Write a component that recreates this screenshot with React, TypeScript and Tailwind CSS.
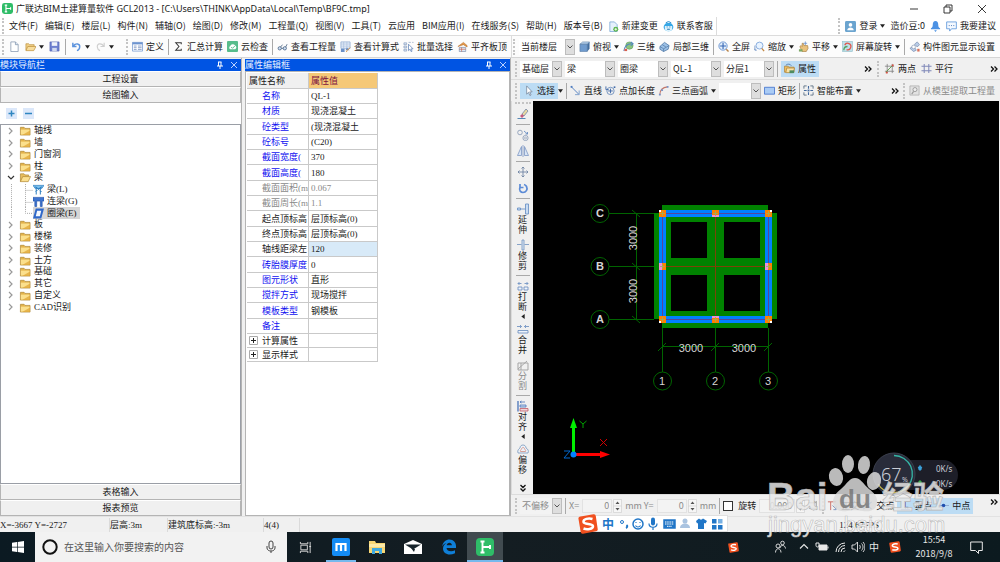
import type { ReactNode } from "react";
import clsx from "clsx";

const UI = "font-['Noto_Sans_CJK_SC','Noto_Sans',sans-serif]";
const SONG = "font-['Liberation_Serif','Noto_Sans_CJK_SC',serif]";

const icons: Record<string, ReactNode> = {
  file: (
    <>
      <path d="M2 1h5l3 3v7.500H2z" fill="#fff" stroke="#7f93ab" strokeWidth=".8" />
      <path d="M7 1v3h3" fill="#dbe6f2" stroke="#7f93ab" strokeWidth=".8" />
    </>
  ),
  open: (
    <>
      <path d="M1 10V3h3l1 1h5v2" fill="#f0cf86" stroke="#b98a33" strokeWidth=".7" />
      <path d="M1 10.500 3 6h9l-2.500 4.500z" fill="#f7dc9c" stroke="#b98a33" strokeWidth=".7" />
    </>
  ),
  save: (
    <>
      <path d="M1 1h10v10H1z" fill="#6d7fd0" stroke="#4b5cab" strokeWidth=".6" />
      <path d="M3 1.300h6v4H3z" fill="#eef2fb" />
      <path d="M3.500 7.500h5V11h-5z" fill="#cfd8ef" />
    </>
  ),
  undo: <path d="M2 2v4h4M2.500 5.500C5 2 10 2.500 9.500 6.500 9.300 8.500 8 10 6.500 10.500" fill="none" stroke="#5c93dd" strokeWidth="1.600" />,
  redo: <path d="M10 2v4H6M9.500 5.500C7 2 2 2.500 2.500 6.500 2.700 8.500 4 10 5.500 10.500" fill="none" stroke="#cfcfcf" strokeWidth="1.300" />,
  define: (
    <>
      <path d="M.5 1.500h11v9.500H.5z" fill="#fff" stroke="#6d94cf" strokeWidth=".8" />
      <path d="M.5 1.500h11v2.200H.5z" fill="#6d94cf" />
      <path d="M2 5.500h3M2 7.300h3M2 9.200h3M6.500 5.500h4M6.500 7.300h4M6.500 9.200h4" stroke="#6b87b8" strokeWidth=".8" />
    </>
  ),
  sigma: <path d="M9 3.500V2H3l3.500 4L3 10h6V8.500" fill="none" stroke="#333" strokeWidth="1.100" />,
  cloud: (
    <>
      <rect width="12" height="12" rx="1" fill="#58bd8c" />
      <path d="M3.500 9a2 2 0 0 1 0-3.500 3 3 0 0 1 5.300-.5A2.200 2.200 0 0 1 9 9z" fill="#fff" />
      <path d="m4.500 6.500 1.500 1.500 2.500-2.500" fill="none" stroke="#4fb983" />
    </>
  ),
  glasses: (
    <>
      <circle cx="3" cy="8" r="1.800" fill="#cfe0f5" stroke="#4a6483" strokeWidth=".9" />
      <circle cx="8.500" cy="8" r="1.800" fill="#cfe0f5" stroke="#4a6483" strokeWidth=".9" />
      <path d="M4.800 8h2M9.500 6.500 11 3.500M4 6.500l2-2.500" stroke="#4a6483" strokeWidth=".9" />
    </>
  ),
  formula: (
    <>
      <path d="M1 1h10v7H1z" fill="#e9f0fa" stroke="#7d9cc9" strokeWidth=".7" />
      <path d="M1 3.300h10M4 1v7M7.500 1v7M1 5.600h10" stroke="#9db5d8" strokeWidth=".6" />
      <path d="M1 8.500h4V12H1zM6 10l1.500-3 3 3z" fill="#6a8fc7" />
      <path d="M7 12c0-3 4-3 4-5" fill="none" stroke="#d49448" />
    </>
  ),
  batch: (
    <>
      <path d="M1 2h3v2H1zM1 5.500h3v2H1zM1 9h3v2H1zM6 1.500h2.500M10 1.500h1.500" fill="#dce7f7" stroke="#8297b8" strokeWidth=".7" />
      <path d="M6 3.500v7l1.700-1.500 1.200 2.600 1-.5-1.200-2.500H11z" fill="#fff" stroke="#5d7fb5" strokeWidth=".8" />
    </>
  ),
  align: (
    <>
      <path d="m1 6 6-4.500L11 5v1.500L7 4z" fill="#e39a4a" stroke="#b66a26" strokeWidth=".6" />
      <path d="M2.500 7h7v4.500h-7z" fill="#dfe9f6" stroke="#7688a6" strokeWidth=".7" />
      <path d="M5 7v4.500M2.500 9h7" stroke="#c85f47" strokeWidth=".7" />
    </>
  ),
  cube: (
    <>
      <path d="m1 3.500 3-2.500h7.500L9 3.500z" fill="#b9d3ee" stroke="#52779f" strokeWidth=".6" />
      <path d="M1 3.500h8v8H1z" fill="#6f9bce" stroke="#52779f" strokeWidth=".6" />
      <path d="M9 3.500 11.500 1v7.500L9 11.500z" fill="#416d9f" />
    </>
  ),
  three: (
    <>
      <circle cx="7" cy="5" r="4" fill="#8bc47e" stroke="#59975a" strokeWidth=".6" />
      <path d="M1 11c0-4 3-8 8-8M8.500 1 11 3 8.500 5" fill="none" stroke="#4f82c4" strokeWidth="1.100" />
      <path d="M1.500 8.500h3V11h-3z" fill="#d65e4e" />
    </>
  ),
  part3d: (
    <>
      <path d="m1 6 5-4.500L11 5l-1 4-5 2.500L1 9z" fill="#9dc1e6" stroke="#46719f" strokeWidth=".8" />
      <path d="m1 6 4 2.500L11 5M5 8.500v3M3.500 4l4 2.500" fill="none" stroke="#46719f" strokeWidth=".7" />
    </>
  ),
  full: (
    <>
      <circle cx="5.500" cy="5.500" r="4.500" fill="#e2eefb" stroke="#6691cf" />
      <path d="M5.500 2.300v6.400M2.300 5.500h6.400" stroke="#3565b4" strokeWidth="1.200" />
      <path d="m9 9 2.500 2.500" stroke="#b7834a" strokeWidth="1.500" />
    </>
  ),
  zoom: (
    <>
      <circle cx="6" cy="5" r="3.800" fill="#e8f3ff" stroke="#82a8dc" />
      <path d="m8.500 8 2.500 3" stroke="#c38a48" strokeWidth="1.500" />
      <path d="M1 5v5h2M.5 8.500l1 1.500" fill="none" stroke="#6b8fc4" strokeWidth=".9" />
    </>
  ),
  pan: (
    <>
      <path d="m2 6 1.500-1 1 1V2.500h1.300L6.500 5h4L11 8l-2 3.500H4.500z" fill="#eac27e" stroke="#a47a3b" strokeWidth=".7" />
      <path d="M8 .5v4M6 2.500h4" stroke="#6b93cf" strokeWidth=".9" />
      <path d="M1 9h4v2.500H1z" fill="#7da765" />
    </>
  ),
  rotate: (
    <>
      <rect x=".5" y=".5" width="11" height="11" fill="#bfe0e9" stroke="#8bb8c6" strokeWidth=".6" />
      <path d="M3 4.500A3.500 3.500 0 1 1 5 9.300" fill="none" stroke="#e0564d" strokeWidth="1.400" />
      <path d="M2 10c0-3 2-4 4-4" fill="none" stroke="#53a365" strokeWidth="1.400" />
    </>
  ),
  show: (
    <>
      <path d="M6 3.500 9 1l2.500 3L9 6.500zM1 8l4-2.500L8 10l-3 1.500z" fill="#b9cde8" stroke="#6d83a8" strokeWidth=".7" />
      <circle cx="5" cy="6.500" r="2" fill="#fff" stroke="#8495b0" strokeWidth=".7" />
      <path d="M9 8.500h2.500v3H9z" fill="#d76d58" />
    </>
  ),
  attr: (
    <>
      <path d="M.5 3.500h4l1 1H11V10H.5z" fill="#eebf63" stroke="#a77a2d" strokeWidth=".7" />
      <path d="M3 5.500h8.500l-1.500 5H2z" fill="#fbe3a6" stroke="#a77a2d" strokeWidth=".7" />
      <path d="M6 8h5v3H6z" fill="#4f8c60" />
      <path d="M2 2.500C4 .5 7 1 8 3" fill="none" stroke="#577fae" />
    </>
  ),
  twoPoint: (
    <>
      <path d="M3.500 1v10M9 1v10M1 3.500h10M1 9h10" stroke="#777" strokeWidth=".8" />
      <path d="m2 10 8-8" stroke="#5a9a4a" />
      <path d="M2 9.500h2v2H2zM8.500 1.500h2v2h-2z" fill="#d84e42" />
    </>
  ),
  parallel: <path d="M3.500 1v10M8.500 1v10M.5 3.500h11M.5 8.500h11" stroke="#7f88b8" strokeWidth="1.100" />,
  cursor: <path d="M4 1v9l2-2 1.500 3.500 1.300-.6-1.500-3.400H10z" fill="#fff" stroke="#6f7f95" strokeWidth=".8" />,
  line: (
    <>
      <path d="m1.500 2 8 8" stroke="#4e7cc0" />
      <path d="M10 6v4.500H5.500" fill="none" stroke="#7b9cca" />
      <path d="M.7 1h2v2h-2z" fill="#4e7cc0" />
    </>
  ),
  pointLen: (
    <>
      <circle cx="6" cy="6.500" r="4" fill="none" stroke="#6d8fbd" />
      <path d="M6 4v5M3.500 6.500h5M1 1.500v3.500h3" fill="none" stroke="#3f69a8" />
      <path d="M9.500 1.500h1.800v1.800H9.500z" fill="#3f69a8" />
    </>
  ),
  arc: (
    <>
      <path d="M2 10.500C2 5 5.500 2.500 10.500 2" fill="none" stroke="#c4786a" strokeWidth="1.200" />
      <path d="M1 9.500h2v2H1zM9.500 1h2v2h-2zM3.500 4.500h2v2h-2z" fill="#7795c9" />
    </>
  ),
  rect: <path d="M.5 2.500h11v7.500H.5z" fill="#a9cbf5" stroke="#4d79cf" />,
  smart: (
    <>
      <path d="M1 4V1h3M8 1h3v3M11 8v3H8M4 11H1V8" fill="none" stroke="#5f7488" />
      <path d="M6 1v3M6 8v3M1 6h3M8 6h3" stroke="#42699f" strokeWidth="1.200" />
      <path d="M5 5h2v2H5z" fill="#42699f" />
    </>
  ),
  extract: (
    <>
      <path d="M1 1h10v10H1z" fill="#e2e2e2" stroke="#aaa" strokeWidth=".8" />
      <circle cx="6.500" cy="5" r="2.200" fill="#eee" stroke="#999" />
      <path d="m5 7-2 3" stroke="#999" strokeWidth="1.200" />
    </>
  ),
  newChange: (
    <>
      <path d="M2 1h5l3 3v7.500H2z" fill="#e5f1fc" stroke="#6fa0d2" strokeWidth=".8" />
      <circle cx="8.500" cy="9" r="2.700" fill="#58b347" />
      <path d="M8.500 7.500v3M7 9h3" stroke="#fff" strokeWidth=".9" />
    </>
  ),
  service: (
    <>
      <ellipse cx="6" cy="6.500" rx="5.300" ry="4.700" fill="#35a7e6" />
      <path d="M2 5.500h8v2.700a4 3 0 0 1-8 0z" fill="#d9f1fd" />
      <path d="M4 6.500h1M7 6.500h1M4.500 9h3" stroke="#176fa8" />
      <path d="m3 2 3-1.500L9 2" fill="none" stroke="#1f86c8" />
    </>
  ),
  user: (
    <>
      <rect width="12" height="12" rx="1.500" fill="#6ba4cf" />
      <circle cx="6" cy="4.300" r="2" fill="#fff" />
      <path d="M2.500 10c0-4 7-4 7 0z" fill="#fff" />
    </>
  ),
  bell: <path d="M6 0c2 0 3 1.500 3 4 0 2 .5 3 2 4v1H1V8c1.500-1 2-2 2-4 0-2.500 1-4 3-4M4.500 10h3L6 12z" fill="#4c92e4" />,
  bubble: (
    <>
      <path d="M.7 1h10.600v7.500H6L4 11V8.500H.7z" fill="#f4f9ff" stroke="#5b95da" strokeWidth=".9" />
      <path d="M3 5h1M5.500 5h1M8 5h1" stroke="#3c70b6" />
    </>
  ),
  erase: (
    <>
      <path d="m5 6 4-5 2 2-4 5z" fill="#e9d9a2" stroke="#667a9e" strokeWidth=".7" />
      <path d="m5 6 2 2-2 2-2-2z" fill="#c65b7d" />
      <path d="M.5 10.500h8" stroke="#5688b5" />
    </>
  ),
  copy: (
    <>
      <circle cx="3" cy="3.500" r="2.300" fill="none" stroke="#8497b4" strokeWidth=".8" />
      <circle cx="8.500" cy="9" r="2.600" fill="none" stroke="#8497b4" strokeWidth=".8" />
      <circle cx="8.500" cy="9" r="1" fill="none" stroke="#8497b4" strokeWidth=".6" />
      <path d="m7 2 3.500 3M10.500 3v2h-2" fill="none" stroke="#5680bd" strokeWidth=".8" />
    </>
  ),
  mirror: <path d="M4.500 1.500v9h-4zM7.500 1.500v9h4zM6 0v12" fill="#d9e5f5" stroke="#7d98c4" strokeWidth=".8" />,
  move: <path d="M6 1v10M1 6h10M4.500 2.500 6 1l1.500 1.500M4.500 9.500 6 11l1.500-1.500M2.500 4.500 1 6l1.500 1.500M9.500 4.500 11 6 9.500 7.500" fill="none" stroke="#6f85a4" strokeWidth=".9" />,
  spin: <path d="M3 2v3.500h3.500M3 5.500C1.500 8.500 4 10.500 6 10.500c3 0 5-3 3.500-6C9 3.500 8 2.800 7 2.500" fill="none" stroke="#5c8bd6" strokeWidth="1.700" />,
  extend: <path d="M8.500 1h3v10h-3zM.5 5h3v2h-3zM3.500 6h5" fill="#c9dcf2" stroke="#6d93c6" strokeWidth=".9" />,
  trim: <path d="M5 1h2v10H5zM0 5.500h4.500M7.500 5.500H12" fill="#dbe7f6" stroke="#7b9ac3" strokeWidth=".9" />,
  split: <path d="M1 7h4v3H1zM7 7h4v3H7zM1 3.500h3.500M7.500 3.500H11M2.500 2 1 3.500 2.500 5M9.500 2 11 3.500 9.500 5" fill="#eef4fb" stroke="#6489bd" strokeWidth=".8" />,
  merge: <path d="M1 7.500h10V10H1zM0 3.500h4.500M7.500 3.500H12M3 2l1.500 1.500L3 5M9 2 7.500 3.500 9 5" fill="#eef4fb" stroke="#6489bd" strokeWidth=".8" />,
  cut: <path d="M1 4h10v7H1zM1 10 10 2M4 4v7" fill="none" stroke="#a5a5a5" strokeWidth="1" />,
  dock: (
    <>
      <path d="M1 1v10.500" stroke="#4974b8" strokeWidth="1.300" />
      <path d="M3 2h5M3 2l1.500-1M3 2l1.500 1M3 5h6v2H3z" fill="#cbdcf2" stroke="#4974b8" strokeWidth=".8" />
      <path d="M3 8.500h8V11H3z" fill="#eed5d9" stroke="#c15c67" strokeWidth=".8" />
    </>
  ),
  offset: (
    <>
      <path d="M1 10C0 7 2 6 3 5c0-4 6-4 6 0 2 1 3 3 2 5z" fill="#edf2f8" stroke="#7998bd" strokeWidth=".8" />
      <path d="M3.500 8.500C3 7 4 7 4.500 6c.5-2 3-2 3 0 1 1 1.500 1.500 1 2.500z" fill="none" stroke="#d08a7e" strokeWidth=".8" />
    </>
  ),
  ortho: (
    <>
      <path d="M1 2h9M4 2v9" stroke="#cc6b63" />
      <path d="m6 6 4 4M10 7v3.500H7" fill="none" stroke="#7a93bd" />
    </>
  ),
  cross: <path d="m1.500 2 9 8M10.500 2l-9 8" stroke="#5c87c4" strokeWidth="1.100" />,
  perp: <path d="M1 10.500h10M6 10.500V2M6 8h2.500v2.500" fill="none" stroke="#5c87c4" strokeWidth="1.100" />,
  mid: (
    <>
      <path d="M0 6h12" stroke="#8fa9d0" />
      <circle cx="6" cy="6" r="2" fill="#1f4fb0" />
    </>
  ),
  angle: <path d="M1 3h7M1 9h7M9 1v10M6 1 9 3M6 11l3-2" fill="none" stroke="#999" />,
  folder: (
    <>
      <path d="M1 2.500h4l1 1.200h5.500V11H1z" fill="#e3b34b" stroke="#a9812c" strokeWidth=".7" />
      <path d="M1.500 5h9.500v5.500H1.500z" fill="#fbe08d" />
      <path d="M11.500 4v7H3l8.500-5z" fill="#dda232" opacity=".7" />
    </>
  ),
  folderOpen: (
    <>
      <path d="M1 10.500V2h4l1 1.200h4V5" fill="#e8bd5d" stroke="#a9812c" strokeWidth=".7" />
      <path d="M1 10.500 3.500 5H12l-2.500 5.500z" fill="#fbdf8e" stroke="#a9812c" strokeWidth=".7" />
    </>
  ),
  beam: (
    <>
      <path d="M0 1.500h12L9.500 5h-7z" fill="#7cc0ee" stroke="#2d7fc1" strokeWidth=".8" />
      <path d="M3.500 5v6.500M8 5v6.500M2.500 3l7 5M9.500 3l-7 5" stroke="#2d7fc1" strokeWidth="1.100" />
    </>
  ),
  linkBeam: <path d="M0 1.500h12v4h-2v6H8v-6H4v6H2v-6H0z" fill="#3e74cf" stroke="#1e4fa6" strokeWidth=".7" />,
  ringBeam: (
    <>
      <path d="M3 .5h9L9 11.500H0z" fill="#2f68c9" />
      <path d="M4.500 3h4.500L7.500 9H3z" fill="#f4f8ff" />
    </>
  ),
};

function Icon({ name, className = "size-[11px]" }: { name: string; className?: string }) {
  return (
    <svg viewBox="0 0 12 12" className={clsx("shrink-0", className)} aria-hidden="true">
      {icons[name]}
    </svg>
  );
}

function Caret() {
  return (
    <svg viewBox="0 0 6 4" className="h-1 w-[5px] shrink-0" aria-hidden="true">
      <path d="M0 0h6L3 4z" fill="#222" />
    </svg>
  );
}

function Tool({
  icon,
  label,
  caret,
  active,
  disabled,
}: {
  icon: string;
  label?: string;
  caret?: boolean;
  active?: boolean;
  disabled?: boolean;
}) {
  return (
    <button
      type="button"
      disabled={disabled}
      aria-label={label ?? icon}
      className={clsx(
        "flex h-4 shrink-0 items-center gap-[3px] whitespace-nowrap",
        active && "bg-[#bcdcf4] px-[3px]",
        disabled && "text-[#8b8b8b]",
      )}
    >
      <Icon name={icon} />
      {label && <span>{label}</span>}
      {caret && <Caret />}
    </button>
  );
}

function Grip() {
  return <span className="h-4 w-0 shrink-0 border-l-2 border-dotted border-[#c4c4c4]" />;
}

function Sep() {
  return <span className="h-4 w-px shrink-0 bg-[#a9a9a9]" />;
}

function More() {
  return (
    <button type="button" aria-label="更多" className="shrink-0">
      <svg viewBox="0 0 8 6" className="h-[6px] w-2" fill="none" stroke="#111" strokeWidth="1.300" aria-hidden="true">
        <path d="m1 .5 2.500 2.500L1 5.500M4.500.5 7 3 4.500 5.500" />
      </svg>
    </button>
  );
}

function Picker({
  label,
  value,
  className,
  disabled,
}: {
  label: string;
  value: string;
  className: string;
  disabled?: boolean;
}) {
  return (
    <label className={clsx("flex h-4 shrink-0", disabled ? "bg-[#f3f3f3] text-[#8b8b8b]" : "bg-white", className)}>
      <select aria-label={label} disabled={disabled} className="h-4 min-w-0 flex-1 appearance-none pl-[2px] outline-none">
        <option>{value}</option>
      </select>
      <span className="flex w-[10px] items-center justify-center border border-[#bdbdbd] bg-[#dedede]">
        <svg viewBox="0 0 6 4" className="h-1 w-[6px]" fill="none" stroke="#555" aria-hidden="true">
          <path d="m.5.5 2.500 2.500L5.500.5" />
        </svg>
      </span>
    </label>
  );
}

function NumberBox({ label, value, className }: { label: string; value: string; className: string }) {
  return (
    <span className="flex h-[14px] shrink-0 items-center gap-px text-[#8b8b8b]">
      <input
        aria-label={label}
        defaultValue={value}
        className={clsx("h-[14px] border border-[#e2e2e2] bg-[#f3f3f3] pr-[2px] text-right outline-none", className)}
      />
      <svg viewBox="0 0 9 14" className="h-[14px] w-[9px]" aria-hidden="true">
        <path d="M.5.5h8v13h-8zM.5 7h8" fill="#f6f6f6" stroke="#d0d0d0" strokeWidth=".7" />
        <path d="m2.500 5 2-2.500 2 2.500zM2.500 9l2 2.500 2-2.500z" fill="#555" />
      </svg>
    </span>
  );
}

function AppLogo({ className }: { className: string }) {
  return (
    <svg viewBox="0 0 18 18" className={clsx("shrink-0", className)} aria-hidden="true">
      <rect width="18" height="18" rx="4" fill="#2fbd68" />
      <path d="M6.500 3.500v11M4.500 3.500h4M4.500 14.500h4M6.500 9H14M14 7v4" fill="none" stroke="#fff" strokeWidth="1.900" />
    </svg>
  );
}

function SogouLogo({ className }: { className: string }) {
  return (
    <svg viewBox="0 0 20 20" className={clsx("shrink-0", className)} aria-hidden="true">
      <path d="M2.500 2.500 15.500.3a2 2 0 0 1 2.300 1.700L19.700 15a2 2 0 0 1-1.700 2.300L5 19.700A2 2 0 0 1 2.700 18L.5 5a2 2 0 0 1 2-2.500" fill="#f0501f" />
      <path d="M14.500 5C10.500 3.800 5.300 5 5.500 7.800c.2 3 9.200 1.200 9.500 4.200.2 3.300-6.300 3.800-9.500 2.500" fill="none" stroke="#fff" strokeWidth="2.500" />
    </svg>
  );
}

const menus = [
  "文件(F)", "编辑(E)", "楼层(L)", "构件(N)", "辅轴(O)", "绘图(D)", "修改(M)", "工程量(Q)",
  "视图(V)", "工具(T)", "云应用", "BIM应用(I)", "在线服务(S)", "帮助(H)", "版本号(B)",
];

function TitleBar() {
  return (
    <header className="flex h-[17px] items-center bg-white pl-[2px]">
      <AppLogo className="size-[11px]" />
      <h1 className="ml-[3px] font-['Noto_Sans','Noto_Sans_CJK_SC',sans-serif] leading-4">
        广联达BIM土建算量软件 GCL2013 - [C:\Users\THINK\AppData\Local\Temp\BF9C.tmp]
      </h1>
      <div className="ml-auto flex gap-6 pr-[13px]">
        {[
          ["最小化", "M1 5h8"],
          ["还原", "M1 3h6v6H1zM3 3V1h6v6H7"],
          ["关闭", "m1 1 8 8M9 1 1 9"],
        ].map(([label, d]) => (
          <button key={label} type="button" aria-label={label}>
            <svg viewBox="0 0 10 10" className="size-[10px]" fill="none" stroke="#222" strokeWidth=".9" aria-hidden="true">
              <path d={d} />
            </svg>
          </button>
        ))}
      </div>
    </header>
  );
}

function MenuBar() {
  return (
    <nav className="flex h-[19px] items-center border-b border-[#dcdcdc] bg-white pl-[2px]">
      <Grip />
      <div className="ml-[5px] flex gap-[7px]">
        {menus.map((m) => (
          <button key={m} type="button" className="shrink-0 whitespace-nowrap">
            {m}
          </button>
        ))}
      </div>
      <div className="ml-[5px] flex h-full items-center gap-[5px] border-r border-[#dcdcdc] pr-[3px]">
        <Tool icon="newChange" label="新建变更" />
        <Tool icon="service" label="联系客服" />
      </div>
      <div className="ml-auto flex items-center gap-[5px] pr-1">
        <Grip />
        <Tool icon="user" label="登录" caret />
        <button type="button">造价豆:0</button>
        <Tool icon="bell" />
        <Tool icon="bubble" label="我要建议" />
      </div>
    </nav>
  );
}

function MainToolbar() {
  return (
    <div className="flex h-[22px] border-b border-[#d5d5d5] bg-[#fcfcfc]">
      <div className="flex w-[512px] shrink-0 items-center gap-[5px] border-r border-[#dcdcdc] pl-[2px]">
        <Grip />
        <Tool icon="file" />
        <Tool icon="open" caret />
        <Tool icon="save" />
        <Sep />
        <Tool icon="undo" caret />
        <Tool icon="redo" caret />
        <div className="ml-[7px] flex items-center gap-1">
          <Grip />
          <Tool icon="define" label="定义" />
          <Sep />
          <Tool icon="sigma" label="汇总计算" />
          <Tool icon="cloud" label="云检查" />
          <Sep />
          <Tool icon="glasses" label="查看工程量" />
          <Tool icon="formula" label="查看计算式" />
          <Tool icon="batch" label="批量选择" />
          <Tool icon="align" label="平齐板顶" />
        </div>
      </div>
      <div className="flex min-w-0 flex-1 items-center gap-1 pl-px">
        <Grip />
        <Picker label="楼层" value="当前楼层" className="w-[56px]" />
        <Tool icon="cube" label="俯视" caret />
        <Tool icon="three" label="三维" />
        <Tool icon="part3d" label="局部三维" />
        <Sep />
        <Tool icon="full" label="全屏" />
        <Tool icon="zoom" label="缩放" caret />
        <Tool icon="pan" label="平移" caret />
        <Tool icon="rotate" label="屏幕旋转" caret />
        <Sep />
        <Tool icon="show" label="构件图元显示设置" />
      </div>
    </div>
  );
}

function PanelHeader({ title }: { title: string }) {
  return (
    <div className="flex h-3 shrink-0 items-center bg-[#0054e3] text-[#e6efff]">
      <h2 className={clsx(SONG, "leading-3")}>{title}</h2>
      <button type="button" aria-label={`固定${title}`} className="ml-auto">
        <svg viewBox="0 0 8 8" className="size-2" fill="none" stroke="#fff" aria-hidden="true">
          <path d="M2.500 1v4M2 1h3.500M5 1v4M1 5h6M4 5v3" />
        </svg>
      </button>
      <button type="button" aria-label={`关闭${title}`} className="mr-[3px] ml-[6px]">
        <svg viewBox="0 0 8 8" className="size-2" stroke="#b9d0ff" aria-hidden="true">
          <path d="m1 1 6 6M7 1 1 7" />
        </svg>
      </button>
    </div>
  );
}

const tree = [
  { label: "轴线" },
  { label: "墙" },
  { label: "门窗洞" },
  { label: "柱" },
  { label: "梁", open: true },
  { label: "梁(L)", icon: "beam" },
  { label: "连梁(G)", icon: "linkBeam" },
  { label: "圈梁(E)", icon: "ringBeam", selected: true },
  { label: "板" },
  { label: "楼梯" },
  { label: "装修" },
  { label: "土方" },
  { label: "基础" },
  { label: "其它" },
  { label: "自定义" },
  { label: "CAD识别" },
];

function BarButton({ children }: { children: ReactNode }) {
  return (
    <button type="button" className="h-4 w-full shrink-0 border border-[#b4b4b4] border-t-white bg-[#f0f0f0] leading-3">
      {children}
    </button>
  );
}

function ModulePanel() {
  return (
    <aside className={clsx(SONG, "flex w-[242px] shrink-0 flex-col border-r border-[#b4b4b4] pt-px")}>
      <PanelHeader title="模块导航栏" />
      <BarButton>工程设置</BarButton>
      <BarButton>绘图输入</BarButton>
      <div className="flex h-[21px] shrink-0 items-center gap-[6px] bg-white pl-[6px]">
        {["M5.500 2.500v6M2.500 5.500h6", "M2 5.500h7"].map((d, i) => (
          <button key={d} type="button" aria-label={i ? "折叠" : "展开"}>
            <svg viewBox="0 0 11 11" className="size-[11px]" aria-hidden="true">
              <path d="M0 0h11v11H0z" fill="#dce8fa" />
              <path d={d} stroke="#2f86c1" strokeWidth="1.500" />
            </svg>
          </button>
        ))}
      </div>
      <div className="flex-1 border border-[#9a9ea6] bg-white">
        <ul className="grid h-[188px] auto-rows-fr text-[9px] leading-[11px]">
          {tree.map((n) => (
            <li key={n.label} className="flex min-h-0 items-center pl-[6px] whitespace-nowrap">
              {n.icon ? (
                <>
                  <svg viewBox="0 0 26 12" preserveAspectRatio="none" className="h-full w-[26px]" fill="none" stroke="#aaa" strokeDasharray="1 1" aria-hidden="true">
                    <path d={n.selected ? "M4.500 0v12M18.500 0v6.500h8" : "M4.500 0v12M18.500 0v12M18.500 6.500h8"} />
                  </svg>
                  <button type="button" className={clsx("flex h-full items-center gap-[3px] pr-[3px]", n.selected && "bg-[#d6d6d6]")}>
                    <Icon name={n.icon} />
                    {n.label}
                  </button>
                </>
              ) : (
                <button type="button" className="flex h-full items-center">
                  <svg viewBox="0 0 8 8" className="size-2" fill="none" stroke={n.open ? "#333" : "#999"} strokeWidth="1.200" aria-hidden="true">
                    <path d={n.open ? "m1 2 3 3 3-3" : "m2 1 3 3-3 3"} />
                  </svg>
                  <Icon name={n.open ? "folderOpen" : "folder"} className="mr-[3px] ml-1 h-[11px] w-3" />
                  {n.label}
                </button>
              )}
            </li>
          ))}
        </ul>
      </div>
      <BarButton>表格输入</BarButton>
      <BarButton>报表预览</BarButton>
    </aside>
  );
}

const blue = "text-[#1010f0]";
const grey = "text-[#8a8a8a]";

const props: { name: string; value: string; tone?: string; active?: boolean }[] = [
  { name: "名称", value: "QL-1", tone: blue },
  { name: "材质", value: "现浇混凝土", tone: blue },
  { name: "砼类型", value: "(现浇混凝土", tone: blue },
  { name: "砼标号", value: "(C20)", tone: blue },
  { name: "截面宽度(", value: "370", tone: blue },
  { name: "截面高度(", value: "180", tone: blue },
  { name: "截面面积(m", value: "0.067", tone: grey },
  { name: "截面周长(m", value: "1.1", tone: grey },
  { name: "起点顶标高", value: "层顶标高(0)" },
  { name: "终点顶标高", value: "层顶标高(0)" },
  { name: "轴线距梁左", value: "120", active: true },
  { name: "砖胎膜厚度", value: "0", tone: blue },
  { name: "图元形状", value: "直形", tone: blue },
  { name: "搅拌方式", value: "现场搅拌", tone: blue },
  { name: "模板类型", value: "钢模板", tone: blue },
  { name: "备注", value: "", tone: blue },
];

function PropertyPanel() {
  const cell = "overflow-hidden border-r border-b border-[#c9c9c9] p-0 text-left font-normal whitespace-nowrap";
  return (
    <section className={clsx(SONG, "ml-[3px] flex w-[266px] shrink-0 flex-col border-r border-[#b4b4b4] pt-px")}>
      <PanelHeader title="属性编辑框" />
      <div className="flex-1 border border-[#b4b4b4] bg-white pt-px pl-px">
        <table className="w-[131px] table-fixed border-separate border-spacing-0 leading-3">
          <thead>
            <tr className="h-4">
              <th className={clsx(cell, "w-[62px] bg-[#f0f0f0] pl-[2px]")}>属性名称</th>
              <th className={clsx(cell, "bg-[#f5c877] pl-[2px] text-[#7a1040]")}>属性值</th>
            </tr>
          </thead>
          <tbody>
            {props.map((p) => (
              <tr key={p.name} className="h-[15px] nth-[3n]:h-4">
                <td className={clsx(cell, "pl-[15px]", p.tone)}>{p.name}</td>
                <td className={clsx(cell, "pl-[2px]", p.tone === grey && grey, p.active && "bg-[#d8eaf8]")}>{p.value}</td>
              </tr>
            ))}
            {["计算属性", "显示样式"].map((name) => (
              <tr key={name} className="h-[14px]">
                <td className={cell}>
                  <button type="button" className="flex items-center gap-1 pl-[2px]">
                    <svg viewBox="0 0 9 9" className="size-[9px]" fill="#fff" aria-hidden="true">
                      <path d="M.5.5h8v8h-8z" stroke="#aaa" />
                      <path d="M4.500 2v5M2 4.500h5" stroke="#222" />
                    </svg>
                    {name}
                  </button>
                </td>
                <td className={cell} />
              </tr>
            ))}
          </tbody>
        </table>
      </div>
    </section>
  );
}

function SideTool({ icon, label, caret, disabled }: { icon: string; label?: string; caret?: boolean; disabled?: boolean }) {
  return (
    <button
      type="button"
      disabled={disabled}
      aria-label={label ?? icon}
      className={clsx("flex shrink-0 flex-col items-center", disabled && "text-[#8b8b8b]")}
    >
      <Icon name={icon} className="size-3" />
      {label && <span className="w-[9px] text-[9px] leading-[10px] break-all">{label}</span>}
      {caret && (
        <svg viewBox="0 0 4 6" className="mt-[2px] h-[5px] w-1" aria-hidden="true">
          <path d="M4 0v6L0 3z" fill="#222" />
        </svg>
      )}
    </button>
  );
}

function SideSep() {
  return <span className="h-px w-[14px] shrink-0 bg-[#a9a9a9]" />;
}

function SideToolbar() {
  return (
    <div className="flex w-[22px] shrink-0 flex-col items-center gap-1 border-l border-[#dcdcdc] pt-px">
      <span className="w-4 border-t-2 border-dotted border-[#c4c4c4]" />
      <SideTool icon="erase" />
      <SideSep />
      <SideTool icon="copy" />
      <SideTool icon="mirror" />
      <SideSep />
      <SideTool icon="move" />
      <SideTool icon="spin" />
      <SideSep />
      <SideTool icon="extend" label="延伸" />
      <SideTool icon="trim" label="修剪" />
      <SideSep />
      <SideTool icon="split" label="打断" caret />
      <SideTool icon="merge" label="合并" />
      <SideTool icon="cut" label="分割" disabled />
      <SideSep />
      <SideTool icon="dock" label="对齐" caret />
      <SideTool icon="offset" label="偏移" />
      <span className="mt-auto mb-[2px] flex h-2 rotate-90 items-center">
        <More />
      </span>
    </div>
  );
}

const xs = [129, 182, 235];
const ys = [112, 165, 218];

// Plan of the ring beam: grid axes, slab strips, beams and column nodes.
function Drawing() {
  return (
    <svg className="block min-h-0 w-full flex-1 bg-black" role="img" aria-label="圈梁平面图">
      <path d="M129 104h106v123H129zM121 112h123v106H121z" fill="#008200" />
      <g fill="#000">
        {[138, 191].map((x) => [121, 174].map((y) => <rect key={`${x}${y}`} x={x} y={y} width="36" height="36" />))}
      </g>
      <path d="M129.500 112.500h106v106h-106z" fill="none" stroke="#0080ff" strokeWidth="7" />
      <path d="M129.500 112.500h106v106h-106z" fill="none" stroke="#56459a" />
      <path d="M182.500 116v98M133 165.500h98" stroke="#7d4208" />
      {xs.map((x) =>
        ys.map((y) =>
          x === 182 && y === 165 ? null : (
            <g key={`${x}-${y}`}>
              <rect x={x - 3} y={y - 3} width="7" height="7" fill="#ff8000" />
              {x !== 182 && y !== 165 && (
                <rect x={x === 129 ? x - 3 : x + 2} y={y === 112 ? y - 3 : y + 2} width="2" height="2" fill="#fff" />
              )}
              {y === 165 && <rect x={x - 3} y={y - 3} width="3" height="7" fill="#f08ed8" />}
              {x === 182 && <rect x={x - 3} y={y === 112 ? y + 2 : y - 3} width="7" height="2" fill="#f08ed8" />}
              <path d={`M${x - 2} ${y + 0.5}h5M${x + 0.5} ${y - 2}v5`} stroke="#9bb060" strokeWidth=".8" />
            </g>
          ),
        ),
      )}
      <g fill="none" stroke="#006400">
        {ys.map((y) => (
          <path key={y} d={`M76 ${y + 0.5}h45M99 ${y - 3}l8 7`} />
        ))}
        <path d="M103.500 112v107M129 245.500h106" />
        {xs.map((x) => (
          <path key={x} d={`M${x + 0.5} 227v44M${x - 4} 250l8-8`} />
        ))}
        {ys.map((y) => (
          <circle key={y} cx="67" cy={y + 0.5} r="9" />
        ))}
        {xs.map((x) => (
          <circle key={x} cx={x + 0.5} cy="280" r="9" />
        ))}
      </g>
      <g fill="#d5d5d5" className="font-['Liberation_Sans',sans-serif] text-[11px]" textAnchor="middle">
        {["C", "B", "A"].map((t, i) => (
          <text key={t} x="67" y={ys[i] + 4} className="font-bold">{t}</text>
        ))}
        {["1", "2", "3"].map((t, i) => (
          <text key={t} x={xs[i]} y="284">{t}</text>
        ))}
        <text x="158" y="251">3000</text>
        <text x="211" y="251">3000</text>
        <text transform="translate(104 137) rotate(-90)">3000</text>
        <text transform="translate(104 190) rotate(-90)">3000</text>
      </g>
      <path d="M40.500 353v-26" stroke="#00f000" strokeWidth="3" />
      <path d="m37 327 3.500-10 3.500 10z" fill="#00f000" />
      <path d="M40 353.500h28" stroke="#f00" strokeWidth="3" />
      <path d="m67 350 10 3.500-10 3.500z" fill="#f00" />
      <circle cx="40.500" cy="353.500" r="3" fill="#0080ff" />
      <g fill="none">
        <path d="m46.500 320 3.500 3 3.500-3M50 323v4" stroke="#00a000" />
        <path d="m67 338 7 7M74 338l-7 7" stroke="#d00000" />
        <path d="M31 350h6l-6 7h6" stroke="#0068d0" />
      </g>
    </svg>
  );
}

function Workspace() {
  return (
    <section className="flex min-w-0 flex-1 flex-col">
      <div className="flex h-[22px] shrink-0 items-center gap-[3px] border-b border-[#dcdcdc] pl-1">
        <Grip />
        <Picker label="楼层" value="基础层" className="w-[42px]" />
        <Picker label="构件类型" value="梁" className="w-[50px]" />
        <Picker label="构件" value="圈梁" className="w-[50px]" />
        <Picker label="名称" value="QL-1" className="w-[50px]" />
        <Picker label="分层" value="分层1" className="w-[50px]" />
        <Sep />
        <Tool icon="attr" label="属性" active />
        <div className="ml-auto flex w-[136px] items-center gap-[5px]">
          <More />
          <Grip />
          <Tool icon="twoPoint" label="两点" />
          <Tool icon="parallel" label="平行" />
          <span className="mr-[2px] ml-auto flex">
            <More />
          </span>
        </div>
      </div>
      <div className="flex h-[21px] shrink-0 items-center gap-[3px] pl-1">
        <Grip />
        <div className="flex items-center">
          <Tool icon="cursor" label="选择" active />
          <Caret />
        </div>
        <Sep />
        <Tool icon="line" label="直线" />
        <Tool icon="pointLen" label="点加长度" />
        <Tool icon="arc" label="三点画弧" caret />
        <Picker label="弧半径" value="" className="w-[42px]" />
        <Tool icon="rect" label="矩形" />
        <Sep />
        <Tool icon="smart" label="智能布置" caret />
        <div className="ml-auto flex items-center gap-1 pr-[5px]">
          <More />
          <Grip />
          <Tool icon="extract" label="从模型提取工程量" disabled />
        </div>
      </div>
      <div className="flex min-h-0 flex-1 pr-px">
        <SideToolbar />
        <div className="flex min-w-0 flex-1 flex-col">
          <Drawing />
        </div>
      </div>
      <div className="flex h-[22px] shrink-0 items-center gap-[3px] border-t border-[#dcdcdc] pl-1">
        <Grip />
        <Picker label="偏移方式" value="不偏移" className="w-[42px]" disabled />
        <Sep />
        <span className="text-[#8b8b8b]">X=</span>
        <NumberBox label="X" value="0" className="w-[30px]" />
        <span className="text-[#8b8b8b]">mm Y=</span>
        <NumberBox label="Y" value="0" className="w-[30px]" />
        <span className="text-[#8b8b8b]">mm</span>
        <Sep />
        <label className="flex items-center gap-[5px]">
          <input type="checkbox" className="size-[10px] appearance-none border border-[#333] bg-white" />
          旋转
        </label>
        <NumberBox label="旋转角度" value="0.000" className="w-9" />
        <Icon name="angle" />
        <Grip />
        <Tool icon="ortho" label="正交" />
        <Tool icon="cross" label="交点" />
        <div className="flex bg-[#bcdcf4]">
          <Tool icon="perp" label="垂点" active />
          <Tool icon="mid" label="中点" active />
        </div>
        <span className="mr-[2px] ml-auto flex self-start pt-1">
          <More />
        </span>
      </div>
    </section>
  );
}

function ImeBar() {
  return (
    <div className="absolute bottom-[29px] left-[578px] flex h-[18px] w-[150px] items-center gap-[6px]">
      <span className="absolute top-0 right-0 left-3 h-[17px] border border-[#e0e0e0] bg-white" />
      <SogouLogo className="relative size-5" />
      <button type="button" className="relative -ml-0.5 text-[12px] leading-4 font-bold text-[#2076c7]">
        中
      </button>
      <svg viewBox="0 0 106 14" className="relative h-[14px] w-[106px]" fill="none" stroke="#2076c7" strokeWidth="1.500" aria-hidden="true">
        <circle cx="2" cy="5" r="1.500" strokeWidth="1" />
        <path d="M6.500 8c1.500 1 .5 2.500-.5 3" strokeWidth="2" />
        <circle cx="18" cy="7" r="5" />
        <path d="M16 5v1M20 5v1M15.500 8.500c1 2 4 2 5 0" strokeWidth="1.100" />
        <path d="M33 2.500v4" strokeWidth="4" strokeLinecap="round" />
        <path d="M29 6.500c0 5 8 5 8 0M33 10v3" strokeWidth="1.200" />
        <path d="M44 3h11v8H44z" fill="#2076c7" />
        <path d="M45 5h9M45 7h9M47 9.300h5" stroke="#fff" strokeDasharray="1.500 .7" strokeWidth="1" />
        <g fill="#a9c3e0" stroke="none">
          <circle cx="65" cy="4" r="2.500" />
          <path d="M60 11c0-6 10-6 10 0z" />
        </g>
        <path d="m76 4 3-2.500c1 1.500 3 1.500 4 0L87 4l-1.500 2.500-1.500-.5v6h-6V6l-1 .5z" fill="#2076c7" stroke="none" />
        <path d="M92 2h4.500v4.500H92zM92 8h4.500v4.500H92zM98 8h4.500v4.500H98z" fill="#2076c7" stroke="none" />
        <path d="M98 2h4.500v4.500H98z" fill="#76b0e3" stroke="none" />
      </svg>
    </div>
  );
}

function SpeedGauge() {
  return (
    <svg viewBox="0 0 88 44" className="absolute right-[40px] bottom-[66px] h-11 w-[88px]" role="img" aria-label="67%">
      <rect x="16" y="8" width="70" height="30" rx="15" fill="#1d1e28" />
      <circle cx="22" cy="22" r="21" fill="#292c3a" stroke="#3b3f4d" />
      <path d="M22 3.500A18.500 18.500 0 0 1 36 34" fill="none" stroke="#35b6a6" strokeWidth="1.300" />
      <path d="M36 34A18.500 18.500 0 0 1 6 32" fill="none" stroke="#c5b64a" strokeWidth="1.300" />
      <g className="font-['Noto_Sans',sans-serif]" fill="#c9cdd6">
        <text x="9" y="29" className="text-[18px] font-light">67</text>
        <text x="30" y="30" className="text-[7px]">%</text>
        <text x="64" y="20" className="text-[8px]">0K/s</text>
        <text x="64" y="35" className="text-[8px]">0K/s</text>
      </g>
      <path d="m46 16 2-2.500 2 2.500h-1v2h-2v-2z" fill="#3aa0d8" stroke="#3aa0d8" />
      <path d="m46 31 2 2.500 2-2.500h-1v-2h-2v2z" fill="#3ab04c" stroke="#3ab04c" />
    </svg>
  );
}

function Watermark() {
  return (
    <svg
      viewBox="0 0 184 90"
      className="pointer-events-none absolute right-[50px] bottom-[20px] h-[90px] w-[184px]"
      role="img"
      aria-label="Baidu 经验"
    >
      <g fill="#dadada" fillOpacity=".85">
        <ellipse cx="70" cy="25" rx="7" ry="9" transform="rotate(-12 70 25)" />
        <ellipse cx="82" cy="12" rx="6" ry="9" />
        <ellipse cx="98" cy="13" rx="6" ry="9" transform="rotate(8 98 13)" />
        <ellipse cx="108" cy="29" rx="7" ry="9" transform="rotate(16 108 29)" />
        <path d="M89 26c6 0 8 6 14 11 5 4 9 8 8 14-1 8-8 9-14 8-6-1-10-1-16 0-7 1-13-1-14-8 0-6 3-10 8-14 6-5 8-11 14-11" />
      </g>
      <g className="font-['Liberation_Sans','Noto_Sans_CJK_SC',sans-serif] font-bold" fill="#e8e8e8" fillOpacity=".85" stroke="#b5b5b5" strokeWidth=".6">
        <text x="1" y="58" className="text-[39px]">Bai</text>
        <text x="73" y="56" className="text-[26px]" fill="#777" stroke="none">du</text>
        <text x="116" y="56" className="text-[31px]">经验</text>
      </g>
      <text x="2" y="80" className="font-['Liberation_Sans',sans-serif] text-[22px]" fill="#fff" fillOpacity=".9" stroke="#bbb" strokeWidth=".6">
        jingyan.baidu.com
      </text>
    </svg>
  );
}

function StatusBar() {
  const cell = "shrink-0 border-r border-[#dadada] whitespace-nowrap";
  return (
    <footer className={clsx(SONG, "flex h-4 shrink-0 items-center border-t border-[#e2e2e2] leading-[14px]")}>
      <span className={clsx(cell, "w-[110px]")}>X=-3667 Y=-2727</span>
      <span className={clsx(cell, "w-[58px]")}>层高:3m</span>
      <span className={clsx(cell, "w-24")}>建筑底标高:-3m</span>
      <span className={clsx(cell, "w-9")}>4(4)</span>
      <span className="mr-[121px] ml-auto">124.67FPS</span>
    </footer>
  );
}

function Taskbar() {
  return (
    <div className="flex h-[30px] shrink-0 items-center bg-linear-to-r from-[#0b1a22] via-[#141d22] to-[#0c1a1f] text-white">
      <button type="button" aria-label="开始" className="flex w-[35px] justify-center">
        <svg viewBox="0 0 12 12" className="size-3" fill="#fff" aria-hidden="true">
          <path d="m0 1.700 5-.7v4.700H0zM5.700.9 12 0v5.700H5.700zM0 6.400h5V11l-5-.7zM5.700 6.400H12V12l-6.300-.9z" />
        </svg>
      </button>
      <div className="flex h-[30px] w-[252px] items-center bg-[#f2f2f2] px-[7px]">
        <svg viewBox="0 0 16 16" className="size-4 shrink-0" fill="none" stroke="#111" strokeWidth="2" aria-hidden="true">
          <circle cx="8" cy="8" r="6.700" />
        </svg>
        <input
          aria-label="搜索"
          placeholder="在这里输入你要搜索的内容"
          className="ml-[6px] min-w-0 flex-1 text-[10px] outline-none placeholder:text-[#555]"
        />
        <svg viewBox="0 0 10 14" className="mr-1 h-[14px] w-[10px]" fill="none" stroke="#444" aria-hidden="true">
          <rect x="3" y="1" width="4" height="8" rx="2" />
          <path d="M1 6v2c0 4 8 4 8 0V6M5 11v2" />
        </svg>
      </div>
      <div className="flex h-full">
        <button type="button" aria-label="任务视图" className="flex w-9 items-center justify-center">
          <svg viewBox="0 0 14 14" className="size-[13px]" fill="none" stroke="#ddd" aria-hidden="true">
            <path d="M2 4.500h7v5H2zM1.500 1v2h8V1M1.500 13v-2h8v2M12 1v12M11 6h2" />
          </svg>
        </button>
        <button type="button" aria-label="傲游浏览器" className="flex w-9 items-center justify-center">
          <span className="flex h-full w-[30px] items-center justify-center border-b-2 border-[#76b9ed] pt-[2px]">
            <svg viewBox="0 0 18 18" className="size-[18px]" aria-hidden="true">
              <rect width="18" height="18" rx="2" fill="#148cf5" />
              <path d="M4.500 13V6h9v7M9 6v7" fill="none" stroke="#fff" strokeWidth="2.200" />
            </svg>
          </span>
        </button>
        <button type="button" aria-label="文件资源管理器" className="flex w-9 items-center justify-center">
          <svg viewBox="0 0 16 14" className="h-[14px] w-4" aria-hidden="true">
            <path d="M0 1h6l1 2h9v10H0z" fill="#f6d674" />
            <path d="M0 4h16v3H0z" fill="#fbe9a8" />
            <path d="M3 14V8h10v6h-3v-3H6v3z" fill="#3fa9e0" />
          </svg>
        </button>
        <button type="button" aria-label="邮件" className="flex w-9 items-center justify-center">
          <svg viewBox="0 0 18 14" className="h-[14px] w-[18px]" aria-hidden="true">
            <path d="m0 4 9-4 9 4v10H0z" fill="#fff" />
            <path d="M1 4.500h16L9 9.500z" fill="#17242b" />
            <path d="m7 8 3 4 1-3z" fill="#17242b" />
          </svg>
        </button>
        <button type="button" aria-label="Edge" className="flex w-9 items-center justify-center">
          <svg viewBox="0 0 16 16" className="size-4" aria-hidden="true">
            <path d="M1 7.500C2 3 5 .5 8.500.5c4 0 6.500 3 6.500 6.500v2H5.500c.2 3 4.500 4.500 8.500 2.300v3C8 17 2 15 2 9.500c0-2.500 1.500-4.500 3.500-5.500C3.500 4.300 2 5.800 1 7.500M5.700 6.300h5.200c0-3.500-5-3.500-5.200 0" fill="#0f7fd8" />
          </svg>
        </button>
        <button type="button" aria-label="GCL2013" className="flex w-9 items-center justify-center border-b-2 border-[#76b9ed] bg-[#414b50] pt-[2px]">
          <AppLogo className="size-[18px]" />
        </button>
      </div>
      <div className="ml-auto flex items-center text-[#e8e8e8]">
        <SogouLogo className="size-[11px]" />
        <svg viewBox="0 0 76 14" className="ml-9 h-[14px] w-[76px]" fill="none" stroke="#e8e8e8" aria-hidden="true">
          <g strokeWidth=".9">
            <circle cx="3" cy="6" r="2" />
            <path d="M.500 12.500c0-5 5.500-5 5.500 0" />
            <circle cx="7.500" cy="3" r="1.800" />
            <path d="M5 8c.5-3.500 5-3.500 5.500.500" />
          </g>
          <path d="m25 8.500 4-4 4 4" strokeWidth="1.100" />
          <path d="M44 5h8v5h-8zM53 6.500v2" fill="#e8e8e8" />
          <path d="M41 3v2.500c0 2 3 2 3 0V3z" />
          <path d="M61 12a9 9 0 0 1 9-9M63.500 12A6.500 6.500 0 0 1 70 5.500M66 12a4 4 0 0 1 4-4M68.500 12l1.500-1.500" />
        </svg>
        <svg viewBox="0 0 14 12" className="h-3 w-[14px]" fill="none" stroke="#e8e8e8" aria-hidden="true">
          <path d="M1 4h2.500L6.500 1v10l-3-3H1zM8.500 4c1 1 1 3 0 4M10.500 2.500c2 2 2 5 0 7M12 1c2.500 3 2.500 7 0 10" strokeWidth=".9" />
        </svg>
        <span className="ml-1 text-[10px]">中</span>
        <SogouLogo className="ml-[10px] size-3" />
        <div className="ml-[13px] w-10 text-center leading-[14px]">
          <div>15:54</div>
          <div>2018/9/8</div>
        </div>
        <button type="button" aria-label="通知" className="mr-[17px] ml-4">
          <svg viewBox="0 0 13 13" className="size-[13px]" fill="none" stroke="#e8e8e8" aria-hidden="true">
            <path d="M.7 1h11.600v8.500H8.500v3l-3-3H.7z" />
          </svg>
        </button>
      </div>
    </div>
  );
}

export default function App() {
  return (
    <div className={clsx(UI, "relative flex min-h-screen flex-col overflow-hidden bg-[#f0f0f0] text-[9px] leading-3 text-[#1a1a1a]")}>
      <TitleBar />
      <MenuBar />
      <MainToolbar />
      <main className="flex min-h-0 flex-1">
        <ModulePanel />
        <PropertyPanel />
        <Workspace />
      </main>
      <StatusBar />
      <Taskbar />
      <ImeBar />
      <SpeedGauge />
      <Watermark />
    </div>
  );
}
